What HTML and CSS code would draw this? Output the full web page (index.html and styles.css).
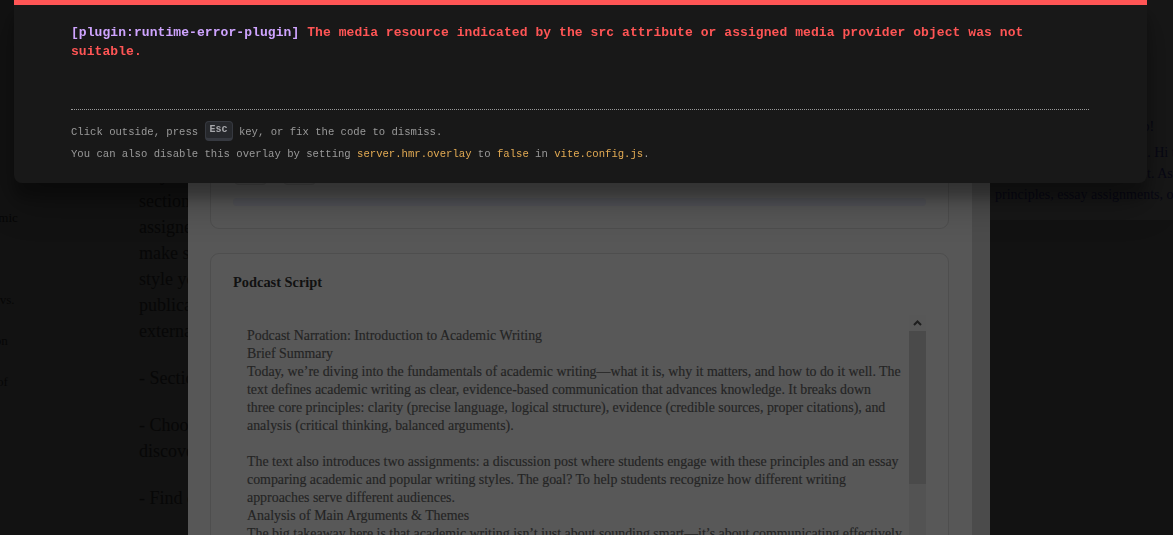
FILE: index.html
```html
<!DOCTYPE html>
<html lang="en">
<head>
<meta charset="utf-8">
<title>Study Guide</title>
<link rel="stylesheet" href="styles.css">
</head>
<body>
<div class="page">
  <aside class="sidebar">
    <ul class="sidebar-list">
      <li>Introduction to Academic</li>
      <li>Three Key Principles.</li>
      <li>Evaluating Academic vs.</li>
      <li>The Discussion Section</li>
      <li>The Three Principles of</li>
    </ul>
  </aside>

  <main class="main">
    <p>In this module, you will explore the foundations of academic<br>
    writing and learn how scholarly texts differ from the popular<br>
    articles you read every day. Begin by reviewing the overview,<br>
    then listen to the audio summary and read the podcast script.<br>
    When you are ready, open the reading and work through each of<br>
    its parts in order. Take notes as you go, paying attention to the<br>
    way the author builds an argument. Read the remaining<br>
    sections of the reading carefully and take notes on the key ideas<br>
    assigned for this week before you begin drafting. Be sure to<br>
    make sure each claim is supported with evidence, and that the<br>
    style you use follows the conventions of academic<br>
    publication, and avoid relying on unverified or<br>
    external sources that are not peer-reviewed.</p>
    <p>- Section 1: Review the key principles of academic writing.</p>
    <p>- Choose one popular article and compare its style to your<br>
    discoveries from the academic reading.</p>
    <p>- Find one additional scholarly source to support your essay.</p>
  </main>

  <section class="assistant">
    <div class="assistant-card">
      <p class="assistant-line">Study assistant</p>
      <p class="assistant-line">Ready when you are.</p>
      <p class="assistant-line">Your reading is open.</p>
      <p class="assistant-line">Welcome to your study hub!</p>
      <p class="assistant-line gap">Your document was loaded. Hi there, let's get started.</p>
      <p class="assistant-line">I can help you understand it. Ask me about the key</p>
      <p class="assistant-line">principles, essay assignments, or the podcast script.</p>
    </div>
  </section>
</div>

<div class="modal">
  <div class="modal-body">
    <div class="card card-audio">
      <h3 class="card-title">Audio Overview</h3>
      <p class="card-text">Listen to a short narrated overview of this week's reading. The<br>
      narration covers the key principles, the assignments, and how<br>
      academic and popular writing compare, so you can review the<br>
      material on the go.</p>
      <div class="btn-row">
        <span class="btn"></span>
        <span class="btn"></span>
      </div>
      <div class="player-bar"></div>
    </div>

    <div class="card card-script">
      <h3 class="card-title">Podcast Script</h3>
      <div class="script-box">
        <div class="script-text">Podcast Narration: Introduction to Academic Writing
Brief Summary
Today, we’re diving into the fundamentals of academic writing—what it is, why it matters, and how to do it well. The
text defines academic writing as clear, evidence-based communication that advances knowledge. It breaks down
three core principles: clarity (precise language, logical structure), evidence (credible sources, proper citations), and
analysis (critical thinking, balanced arguments).

The text also introduces two assignments: a discussion post where students engage with these principles and an essay
comparing academic and popular writing styles. The goal? To help students recognize how different writing
approaches serve different audiences.
Analysis of Main Arguments &amp; Themes
The big takeaway here is that academic writing isn’t just about sounding smart—it’s about communicating effectively
with readers who expect careful reasoning and honest use of sources.</div>
        <div class="script-scroll">
          <div class="scroll-up">
            <svg width="9" height="6" viewBox="0 0 9 6"><polyline points="1,5 4.5,1.5 8,5" fill="none" stroke="#1e1e1e" stroke-width="2"/></svg>
          </div>
          <div class="scroll-thumb"></div>
        </div>
      </div>
    </div>
  </div>
  <div class="modal-track"></div>
</div>

<div class="vite-window">
  <div class="vite-message"><span class="vite-plugin">[plugin:runtime-error-plugin]</span> <span class="vite-body">The media resource indicated by the src attribute or assigned media provider object was not suitable.</span></div>
  <div class="vite-tip">
    <div>Click outside, press <kbd class="vite-kbd">Esc</kbd> key, or fix the code to dismiss.</div>
    <div>You can also disable this overlay by setting <code class="vite-code">server.hmr.overlay</code> to <code class="vite-code">false</code> in <code class="vite-code">vite.config.js</code>.</div>
  </div>
</div>
</body>
</html>
```

FILE: styles.css
```css
* { box-sizing: border-box; }

html, body {
  margin: 0;
  padding: 0;
  width: 1173px;
  height: 535px;
  overflow: hidden;
  background: #121212;
}

body {
  font-family: "Liberation Serif", serif;
}

.page {
  display: flex;
  width: 1173px;
  height: 535px;
  overflow: hidden;
}

/* left navigation (mostly scrolled out of view) */
.sidebar {
  flex: 0 0 30px;
  overflow: hidden;
}

.sidebar-list {
  list-style: none;
  margin: 0 0 0 -115px;
  padding: 208px 0 0;
  width: 145px;
  white-space: nowrap;
  font-size: 13px;
  line-height: 20px;
  color: #060606;
}

.sidebar-list li {
  margin-bottom: 21px;
}

/* main column */
.main {
  flex: 0 0 960px;
  padding: 6px 0 0 109px;
  font-size: 18px;
  line-height: 26px;
  color: #070707;
  white-space: nowrap;
  overflow: hidden;
}

.main p {
  margin: 0 0 21px;
}

/* right assistant panel */
.assistant {
  flex: 0 0 420px;
}

.assistant-card {
  background: #171717;
  height: 220px;
  padding: 53px 0 0 5px;
  font-size: 14px;
  line-height: 21px;
  color: #070714;
  white-space: nowrap;
  overflow: hidden;
}

.assistant-line {
  margin: 0;
}

.assistant-line.gap {
  margin-top: 5px;
}

/* app modal */
.modal {
  position: fixed;
  top: 0;
  left: 188px;
  width: 802px;
  height: 535px;
  display: flex;
  background: #575757;
}

.modal-body {
  flex: 1;
  padding: 19px 23px 0 22px;
  overflow: hidden;
}

.modal-track {
  flex: 0 0 18px;
  background: #4b4b4b;
}

.card {
  background: #585858;
  border: 1px solid #4e4e4e;
  border-radius: 9px;
  padding: 22px;
}

.card-audio {
  margin-bottom: 24px;
}

.card-title {
  margin: 0;
  font-size: 14.4px;
  line-height: 20px;
  font-weight: 700;
  color: #111111;
}

.card-audio .card-title {
  margin-bottom: 14px;
}

.card-text {
  margin: 0 0 13px;
  font-size: 13.9px;
  line-height: 18px;
  color: #262626;
  white-space: nowrap;
}

.btn-row {
  display: flex;
  gap: 14px;
  margin-bottom: 13px;
}

.btn {
  width: 35px;
  height: 24px;
  border-radius: 6px;
  border: 1px solid #4c4c4c;
  background: #545454;
}

.player-bar {
  height: 8px;
  border-radius: 4px;
  background: #535459;
}

.card-script {
  padding: 18px 22px 0;
  height: 320px;
}

.script-box {
  display: flex;
  margin-top: 23px;
  height: 300px;
}

.script-text {
  flex: 1;
  padding: 12px 14px;
  font-size: 13.9px;
  line-height: 18px;
  color: #242424;
  white-space: pre;
  overflow: hidden;
  -webkit-text-stroke: 0.15px #242424;
}

.script-scroll {
  flex: 0 0 17px;
  display: flex;
  flex-direction: column;
  background: #535353;
}

.scroll-up {
  height: 16px;
  background: #575757;
  display: flex;
  align-items: center;
  justify-content: center;
}

.scroll-up svg {
  display: block;
}

.scroll-thumb {
  height: 153px;
  background: #4a4a4a;
}

/* vite error overlay */
.vite-window {
  position: fixed;
  top: 0;
  left: 14px;
  width: 1133px;
  padding: 18px 58px 18px 57px;
  background: #181818;
  border-top: 5px solid #ff5555;
  border-radius: 0 0 8px 8px;
  box-shadow: 0 19px 38px rgba(0, 0, 0, 0.30), 0 15px 12px rgba(0, 0, 0, 0.22);
  font-family: "Liberation Mono", monospace;
  color: #d8d8d8;
}

.vite-message {
  font-size: 13px;
  letter-spacing: 0.07px;
  line-height: 19px;
  font-weight: 700;
  white-space: pre-wrap;
  margin-bottom: 48px;
}

.vite-plugin {
  color: #cfa4ff;
}

.vite-body {
  color: #ff5555;
}

.vite-tip {
  border-top: 1px dotted #999999;
  padding-top: 11px;
  font-size: 10.6px;
  line-height: 22px;
  color: #999999;
}

.vite-kbd {
  display: inline-block;
  vertical-align: middle;
  font-family: "Liberation Mono", monospace;
  font-size: 10px;
  font-weight: 700;
  line-height: 14px;
  padding: 1px 4px;
  background: #26282c;
  color: #a6a7ab;
  border: 1px solid #363940;
  border-bottom-width: 3px;
  border-radius: 4px;
  margin-top: -2px;
}

.vite-code {
  font-family: "Liberation Mono", monospace;
  font-size: 10.6px;
  color: #e2aa53;
}
```
